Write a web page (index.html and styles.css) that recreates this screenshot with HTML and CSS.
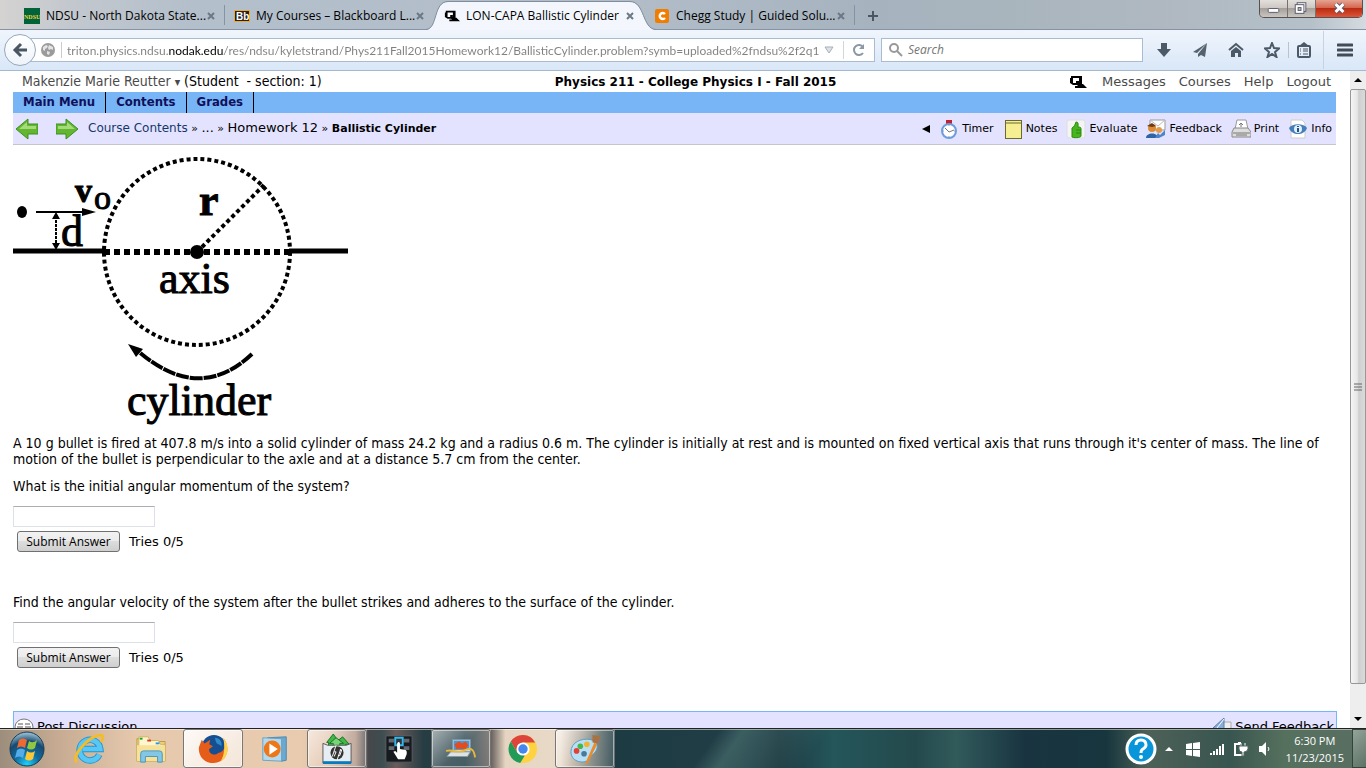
FILE: index.html
```html
<!DOCTYPE html>
<html lang="en">
<head>
  <meta charset="UTF-8">
  <title>LON-CAPA Ballistic Cylinder</title>
  <link rel="stylesheet" href="styles.css">
</head>
<body>
  <!-- shapes used more than once -->
  <svg class="defs" aria-hidden="true">
    <symbol id="lon" viewBox="0 0 18 14">
      <path d="M2 1h11v8h1l4 4H6v-2h3L8 10H4L1 8V3h1z" fill="#000"/>
      <path d="M4 3h6v5H4z" fill="#fff"/>
      <path d="M7 6h3v2H7z" fill="#000"/>
    </symbol>
    <symbol id="close" viewBox="0 0 8 8">
      <path d="M1 1l6 6M7 1L1 7" stroke="#6c7885" stroke-width="2" fill="none"/>
    </symbol>
  </svg>

  <!-- tabs -->
  <header class="tabstrip">
    <div class="tab first">
      <svg class="favicon" viewBox="0 0 16 16"><path d="M0 0h16v16H0z" fill="#00633a"/><text x="0" y="11" class="ndsu">NDSU</text></svg>
      <a href="#" class="tab-title">NDSU - North Dakota State...</a>
      <button class="tab-close" aria-label="Close tab"><svg viewBox="0 0 8 8"><use href="#close"/></svg></button>
    </div>
    <div class="tab second">
      <svg class="favicon" viewBox="0 0 16 16"><rect x="0.5" y="2.5" width="15" height="11" fill="#222" stroke="#f5a623"/><text x="2" y="12" class="bb">Bb</text></svg>
      <a href="#" class="tab-title">My Courses – Blackboard L...</a>
      <button class="tab-close" aria-label="Close tab"><svg viewBox="0 0 8 8"><use href="#close"/></svg></button>
    </div>
    <div class="tab active">
      <svg class="tab-shape" viewBox="0 0 230 30" preserveAspectRatio="none">
        <path d="M0 30C12 29 7 2 22 2H204C219 2 216 29 230 30z" fill="#f3f7fd"/>
        <path d="M0 29.500C12 29 7 1.500 22 1.500H204C219 1.500 216 29 230 29.500" fill="none" stroke="#7f8d9c"/>
      </svg>
      <svg class="favicon" viewBox="0 0 18 14"><use href="#lon"/></svg>
      <a href="#" class="tab-title">LON-CAPA Ballistic Cylinder</a>
      <button class="tab-close" aria-label="Close tab"><svg viewBox="0 0 8 8"><use href="#close"/></svg></button>
    </div>
    <div class="tab fourth">
      <svg class="favicon" viewBox="0 0 16 16"><rect x="1" y="1" width="14" height="14" rx="2" fill="#f07d00"/><path d="M11 6A3 3 0 1 0 11 10" fill="none" stroke="#fff" stroke-width="2.500"/></svg>
      <a href="#" class="tab-title">Chegg Study | Guided Solu...</a>
      <button class="tab-close" aria-label="Close tab"><svg viewBox="0 0 8 8"><use href="#close"/></svg></button>
    </div>
    <button class="new-tab" aria-label="New tab"><svg viewBox="0 0 10 10"><path d="M5 0v10M0 5h10" stroke="#4a5663" stroke-width="2"/></svg></button>
    <div class="window-buttons">
      <button class="win min" aria-label="Minimize"><svg viewBox="0 0 28 18"><rect x="8.500" y="8.500" width="11" height="4" rx="1" fill="#fff" stroke="#59596b"/></svg></button>
      <button class="win max" aria-label="Restore"><svg viewBox="0 0 28 18"><rect x="9.500" y="2.500" width="9" height="9" fill="#fff" stroke="#59596b"/><rect x="7.500" y="4.500" width="9" height="9" fill="#fff" stroke="#59596b"/><rect x="10.500" y="7.500" width="3" height="3" fill="#bbb" stroke="#59596b"/></svg></button>
      <button class="win exit" aria-label="Close"><svg viewBox="0 0 47 18"><path d="M20 4l8 8M28 4l-8 8" stroke="#59596b" stroke-width="5"/><path d="M20 4l8 8M28 4l-8 8" stroke="#fff" stroke-width="3"/></svg></button>
    </div>
  </header>

  <!-- address bar -->
  <nav class="toolbar">
    <button class="back" aria-label="Back"><svg viewBox="0 0 16 16"><path d="M9 2L3 8l6 6M3 8h12" fill="none" stroke="#4a5662" stroke-width="3"/></svg></button>
    <div class="url-box">
      <svg class="globe" viewBox="0 0 14 14"><circle cx="7" cy="7" r="7" fill="#9b9b9b"/><path d="M2 4l3-2 2 1-1 2-2 1v2L2 7zM8 2l4 2v3l-2-1-2 1-1-2zM6 8l3 1-1 3-2-1z" fill="#e4e4e4"/></svg>
      <input class="url" type="text" aria-label="Address" value="triton.physics.ndsu.nodak.edu/res/ndsu/kyletstrand/Phys211Fall2015Homework12/BallisticCylinder.problem?symb=uploaded%2fndsu%2f2q1">
      <button class="plain" aria-label="Show history"><svg class="drop" viewBox="0 0 10 8"><path d="M1 1h8L5 7z" fill="#dfe3e8" stroke="#a5afb9"/></svg></button>
      <button class="plain reload" aria-label="Reload"><svg viewBox="0 0 12 12"><path d="M10 3A5 5 0 1 0 10 9" fill="none" stroke="#8c98a5" stroke-width="2"/><path d="M11 0v5H6z" fill="#8c98a5"/></svg></button>
    </div>
    <div class="search-box">
      <svg viewBox="0 0 14 14"><circle cx="5" cy="5" r="4" fill="none" stroke="#999" stroke-width="2"/><path d="M8 8l5 5" stroke="#999" stroke-width="2"/></svg>
      <input class="search" type="text" placeholder="Search" aria-label="Search">
    </div>
    <div class="tools">
      <button class="plain" aria-label="Downloads"><svg viewBox="0 0 16 16"><path d="M5 1h6v6h4l-7 8-7-8h4z" fill="#4c5966"/></svg></button>
      <button class="plain" aria-label="Send page"><svg viewBox="0 0 16 16"><path d="M15 1L1 10l4 1zM15 1L6 12v3l3-2 4 2z" fill="#55626f"/></svg></button>
      <button class="plain" aria-label="Home"><svg viewBox="0 0 16 16"><path d="M1 8l7-6 7 6" fill="none" stroke="#4c5966" stroke-width="2"/><path d="M3 9l5-4 5 4v6h-3v-4H7v4H3z" fill="#4c5966"/></svg></button>
      <button class="plain" aria-label="Bookmark this page"><svg viewBox="0 0 16 16"><path d="M8 1l2 5 5 .5-4 3.500 1.500 5L8 12l-4.500 3L5 10 1 6.500 6 6z" fill="none" stroke="#4c5966" stroke-width="2"/></svg></button>
      <button class="plain list" aria-label="Bookmarks"><svg viewBox="0 0 16 16"><rect x="2" y="4" width="12" height="11" rx="1" fill="none" stroke="#4c5966" stroke-width="2"/><path d="M3 4l5-4 5 4z" fill="#4c5966"/><path d="M4 7h1M7 7h5M4 9h1M7 9h5M4 12h1M7 12h5" stroke="#4c5966"/></svg></button>
      <button class="plain burger" aria-label="Menu"><svg viewBox="0 0 16 16"><path d="M1 3h14M1 8h14M1 13h14" stroke="#414c58" stroke-width="3" stroke-linecap="round"/></svg></button>
    </div>
  </nav>

  <div class="viewport">
    <main class="page">
      <div class="user-row">
        <div class="user"><a href="#">Makenzie Marie Reutter <span class="caret">▾</span></a> (Student &nbsp;- section: 1)</div>
        <strong class="course">Physics 211 - College Physics I - Fall 2015</strong>
        <div class="user-links">
          <svg class="lon" viewBox="0 0 18 14"><use href="#lon"/></svg>
          <a href="#">Messages</a>
          <a href="#">Courses</a>
          <a href="#">Help</a>
          <a href="#">Logout</a>
        </div>
      </div>
      <nav class="menu">
        <a href="#">Main Menu</a>
        <a href="#">Contents</a>
        <a href="#">Grades</a>
      </nav>
      <div class="crumb-row">
        <a href="#" class="arrow" aria-label="Previous"><svg viewBox="0 0 22 22"><path d="M0 11L12 1v5h10v10H12v5z" fill="#62b630" stroke="#3f8f22"/><path d="M3 11l8-7v4h9v3z" fill="#a5dc79"/></svg></a>
        <a href="#" class="arrow" aria-label="Next"><svg viewBox="0 0 22 22"><path d="M22 11L10 1v5H0v10h10v5z" fill="#62b630" stroke="#3f8f22"/><path d="M19 11l-8-7v4H2v3z" fill="#a5dc79"/></svg></a>
        <div class="crumbs"><a href="#">Course Contents</a> » <span class="big">...</span> » <span class="big">Homework 12</span> » <b>Ballistic Cylinder</b></div>
        <div class="functions">
          <svg class="fold" viewBox="0 0 8 8"><path d="M8 0v8L0 4z"/></svg>
          <a href="#"><svg viewBox="0 0 20 20"><path d="M7 1h6v4H7z" fill="#c5202c"/><circle cx="10" cy="12" r="7" fill="#fff" stroke="#6e9ddd" stroke-width="2"/><path d="M6 9l4 4 5-2" fill="none" stroke="#777"/><path d="M10 6v1M10 17v1M4 12h1M15 12h1" stroke="#999"/></svg>Timer</a>
          <a href="#"><svg viewBox="0 0 20 20"><rect x="2.500" y="1.500" width="16" height="18" fill="#f5ef92" stroke="#6b6830"/><path d="M3 4h15" stroke="#6b6830"/></svg>Notes</a>
          <a href="#"><svg viewBox="0 0 20 20"><rect x="1" y="1" width="18" height="18" rx="2" fill="#f4f4f4" stroke="#ddd"/><path d="M10 3c3 0 2 3 2 5 3 0 3 1 3 2v7c0 2-8 2-9 1V9c2-1 3-3 4-6z" fill="#47b51d" stroke="#278a10"/><path d="M10 11h5M10 14h5" stroke="#278a10"/></svg>Evaluate</a>
          <a href="#"><svg viewBox="0 0 20 20"><path d="M4 1h15v10H4z" fill="#fff" stroke="#999"/><path d="M4 1l8 6 7-6" fill="none" stroke="#bbb"/><path d="M0 19c0-6 12-6 12 0z" fill="#2f63a3"/><circle cx="6" cy="9" r="4" fill="#dd8a35"/><path d="M1 7l5-3 4 3-4 1z" fill="#6b3b1b"/><circle cx="13" cy="11" r="3" fill="#e29a49"/><path d="M9 19l3-5 2 2 5-5v5l-6 3z" fill="#4d84c8"/></svg>Feedback</a>
          <a href="#"><svg viewBox="0 0 20 20"><path d="M6 1h9l2 9H4z" fill="#fff" stroke="#999"/><path d="M10 8V4M8 6l2-2 2 2" fill="none" stroke="#777"/><path d="M3 9h14l3 4v5H1v-5z" fill="#ddd" stroke="#888"/><path d="M2 14h17M5 16h11" stroke="#777"/></svg>Print</a>
          <a href="#"><svg viewBox="0 0 20 20"><path d="M3 1h11l3 3v15H3z" fill="#fff" stroke="#ccc"/><path d="M1 9c3-5 15-5 18 0-3 8-15 8-18 0z" fill="#467fb8"/><circle cx="10" cy="10" r="4" fill="#e1efff"/><path d="M10 7v1M10 9v4" stroke="#24527e" stroke-width="2"/></svg>Info</a>
        </div>
      </div>

      <svg class="diagram" viewBox="13 149 336 276" role="img" aria-label="Bullet moving toward a cylinder at distance d from its axis">
        <path d="M13 251H104M289 251H348" stroke="#000" stroke-width="5"/>
        <path d="M104 252H289" stroke="#000" stroke-width="6" stroke-dasharray="6 4"/>
        <circle cx="197" cy="252" r="93" fill="none" stroke="#000" stroke-width="4" stroke-dasharray="4 3"/>
        <path d="M197 252L264 185" stroke="#000" stroke-width="4" stroke-dasharray="4 3"/>
        <circle cx="197" cy="252" r="7"/>
        <ellipse cx="22" cy="212" rx="5" ry="6"/>
        <path d="M36 212H86" stroke="#000" stroke-width="2"/>
        <path d="M96 212l-14-4v8z"/>
        <path d="M56 216V247" stroke="#000" stroke-width="2" stroke-dasharray="3 1"/>
        <path d="M56 212l-4 7h8zM56 250l-4-7h8z"/>
        <path d="M252 354Q199 404 138 351" fill="none" stroke="#000" stroke-width="4" stroke-dasharray="13 1"/>
        <path d="M128 344l15 5-7 8z"/>
        <text x="75" y="202" class="label sub bold">v</text>
        <text x="94" y="209" class="label sub">o</text>
        <text x="61" y="246" class="label">d</text>
        <text x="199" y="215" class="label bold">r</text>
        <text x="159" y="293" class="label">axis</text>
        <text x="127" y="415" class="label">cylinder</text>
      </svg>

      <p class="problem">A 10 g bullet is fired at 407.8 m/s into a solid cylinder of mass 24.2 kg and a radius 0.6 m. The cylinder is initially at rest and is mounted on fixed vertical axis that runs through it's center of mass. The line of motion of the bullet is perpendicular to the axle and at a distance 5.7 cm from the center.</p>

      <form class="part">
        <label for="answer1">What is the initial angular momentum of the system?</label>
        <input type="text" id="answer1">
        <div class="submit-row"><button type="button">Submit Answer</button> Tries 0/5</div>
      </form>
      <form class="part">
        <label for="answer2">Find the angular velocity of the system after the bullet strikes and adheres to the surface of the cylinder.</label>
        <input type="text" id="answer2">
        <div class="submit-row"><button type="button">Submit Answer</button> Tries 0/5</div>
      </form>

      <footer class="discussion">
        <a href="#"><svg viewBox="0 0 20 20"><ellipse cx="10" cy="10" rx="9" ry="8" fill="#fff" stroke="#777"/><path d="M4 7h5M11 7h5M3 10h6M11 10h6M5 13h10" stroke="#555"/></svg>Post Discussion</a>
        <a href="#"><svg viewBox="0 0 20 20"><path d="M8 5h11v12H8z" fill="#eee" stroke="#aaa"/><path d="M1 11L12 1v13z" fill="#86addb" stroke="#587fac"/><path d="M5 11l7-9" stroke="#fff"/></svg>Send Feedback</a>
      </footer>
    </main>

    <div class="scrollbar">
      <button aria-label="Scroll up"><svg viewBox="0 0 8 4"><path d="M0 4l4-4 4 4z"/></svg></button>
      <div class="thumb"><svg viewBox="0 0 8 8"><path d="M0 1h8M0 4h8M0 7h8" stroke="#666"/></svg></div>
      <button class="down" aria-label="Scroll down"><svg viewBox="0 0 8 4"><path d="M0 0h8L4 4z"/></svg></button>
    </div>
  </div>

  <!-- taskbar -->
  <footer class="taskbar">
    <button class="start" aria-label="Start">
      <svg viewBox="0 0 36 36">
        <defs><radialGradient id="orb" cx="50%" cy="95%" r="90%"><stop offset="0" stop-color="#1ed3ff"/><stop offset=".4" stop-color="#116c9f"/><stop offset=".75" stop-color="#174a70"/><stop offset="1" stop-color="#8eb5c9"/></radialGradient></defs>
        <circle cx="18" cy="18" r="17" fill="url(#orb)" stroke="#173c56"/>
        <path d="M10 9q4-3 8 0l-2 8q-4-3-8 0z" fill="#ef6a30"/><path d="M20 10q4 3 8-1l-2 8q-4 3-8 0z" fill="#91c83e"/><path d="M8 19q4-3 8 0l-2 8q-4-3-8 0z" fill="#55acea"/><path d="M18 20q4 3 8 0l-2 8q-4 3-8 0z" fill="#fcc934"/>
      </svg>
    </button>
    <button class="task" aria-label="Internet Explorer"><svg viewBox="0 0 32 32"><path d="M27 22A11 11 0 1 1 28 16H9" fill="none" stroke="#2794d0" stroke-width="7"/><path d="M27 22A11 11 0 1 1 28 16H9" fill="none" stroke="#58c7f3" stroke-width="5"/><path d="M3 30C-4 24 15 3 28 1c4 0 3 4 1 8" fill="none" stroke="#f4bd28" stroke-width="3"/></svg></button>
    <button class="task" aria-label="Explorer"><svg viewBox="0 0 32 32"><path d="M1 5h9v3h21v21H1z" fill="#eed177" stroke="#bc9b43"/><path d="M3 3h10l2 4h9l2 4h4v4H3z" fill="#fff6ce" stroke="#cbb15e"/><path d="M4 4h3v2H4z" fill="#19a52d"/><path d="M12 6h4v2h-4z" fill="#dc3427"/><path d="M21 9h4v2h-4z" fill="#2996e8"/><path d="M1 12h30v17H1z" fill="#f6e198"/><path d="M5 30V21q0-3 3-3h17q3 0 3 3v9h-5v-6H10v6z" fill="#83c7e6" stroke="#4a93bb"/></svg></button>
    <button class="task open bright" aria-label="Firefox"><svg viewBox="0 0 32 32"><circle cx="17" cy="14" r="13" fill="#164f91"/><path d="M18 4c5 0 8 4 7 9-2-2-5-2-6-5z" fill="#2e8ac9"/><path d="M27 4c8 10 5 26-10 27C7 31 0 24 1 14L4 6l3 4 6-4-1 5 4 2-4 3c-1 5 6 8 10 4 7-1 8-10 5-16z" fill="#e55d19"/><path d="M27 4c8 10 5 21-3 25 4-6 5-14 3-25z" fill="#ffd34b"/></svg></button>
    <button class="task" aria-label="Media Player"><svg viewBox="0 0 32 32"><path d="M8 4l20-1v25l-5 1z" fill="#6ba9d0" stroke="#4c88af"/><path d="M3 4l20 1v24L3 28z" fill="#b2d9ef" stroke="#67a2c4"/><circle cx="13" cy="16" r="9" fill="#ef7617"/><path d="M10 10l9 6-9 6z" fill="#fff"/></svg></button>
    <button class="task open" aria-label="HP Download Store"><svg viewBox="0 0 32 32"><path d="M5 9l7-9 5 7 5-4 7 8h-4v2H7V9z" fill="#41b849" stroke="#176f25"/><path d="M8 10l7-6 8 6h-4v4h-7v-4z" fill="#77d576" stroke="#176f25"/><path d="M1 10l5 2h20l5-2v21H1z" fill="#e7eef3" stroke="#555"/><path d="M1 29h30v3H1z" fill="#087bbf"/><circle cx="16" cy="20" r="7" fill="#333"/><path d="M15 12l-4 12M13 19h2l-2 5M20 16l-4 12M19 17h2l-2 6h-2" fill="none" stroke="#fff"/></svg></button>
    <button class="task" aria-label="Touch keyboard"><svg viewBox="0 0 32 32"><rect x="2" y="2" width="28" height="28" rx="1" fill="#171b20" stroke="#5a5f64"/><path d="M5 5h6v4H5zM21 5h6v4h-6zM5 13h6v4H5zM21 13h6v4h-6z" fill="#626970"/><path d="M12 4h8v8h-8z" fill="#273641" stroke="#36b7e9" stroke-width="2"/><path d="M14 10q2-3 3 0v6l6 1q2 1 1 5l-2 5h-7l-5-8 2-1 2 2z" fill="#fff"/></svg></button>
    <button class="task open" aria-label="Display settings"><svg viewBox="0 0 32 32"><path d="M7 6h19v13H7z" fill="#c8e8f5" stroke="#7894a2"/><path d="M8 7h17v10H8z" fill="#5394ce"/><path d="M9 11l5-3 3 2 4-2 3 4-3 4H11z" fill="#e24c1f"/><path d="M5 19h21l-3 5H1z" fill="#dce2e6" stroke="#8b969d"/><path d="M0 18c10-2 12 4 21-1 7-3 9 1 10 8" fill="none" stroke="#e7b93b" stroke-width="2"/></svg></button>
    <button class="task" aria-label="Chrome"><svg viewBox="0 0 32 32"><circle cx="16" cy="16" r="15" fill="#ffd340"/><path d="M3 8A15 15 0 0 1 29 9H16L10 20z" fill="#dd443b"/><path d="M3 8l7 12 8 3-5 8A15 15 0 0 1 3 8z" fill="#219b58"/><circle cx="16" cy="16" r="7" fill="#fff"/><circle cx="16" cy="16" r="5" fill="#4687ef"/></svg></button>
    <button class="task open" aria-label="Paint"><svg viewBox="0 0 32 32"><path d="M1 19C1 9 12 4 22 6c7 2 9 7 5 13-3 4-5 3-7 8-3 5-19 4-19-8z" fill="#b8dff3" stroke="#579cc5"/><circle cx="7" cy="18" r="3" fill="#e14235"/><circle cx="11" cy="13" r="3" fill="#49b747"/><circle cx="18" cy="11" r="3" fill="#f0b42d"/><circle cx="15" cy="21" r="3" fill="#46799a"/><path d="M26 9L16 32l3-1L29 11z" fill="#eb8b2a"/><path d="M24 1l8 1-2 8-6-1z" fill="#a97242"/></svg></button>

    <div class="tray">
      <button class="help" aria-label="Help"><svg viewBox="0 0 32 32"><circle cx="16" cy="16" r="14" fill="#0895d9" stroke="#fff" stroke-width="3"/><path d="M11 12q0-5 5-5t5 5q0 2-3 4-2 1-2 4" fill="none" stroke="#fff" stroke-width="3"/><circle cx="16" cy="24" r="2" fill="#fff"/></svg></button>
      <button class="up" aria-label="Show hidden icons"><svg viewBox="0 0 8 4"><path d="M0 4l4-4 4 4z" fill="#fff"/></svg></button>
      <button aria-label="Windows"><svg viewBox="0 0 16 16"><path d="M1 3l6-1v6H1zM8 2l7-1v7H8zM1 9h6v6l-6-1zM8 9h7v7l-7-1z" fill="#fff"/></svg></button>
      <button aria-label="Network"><svg viewBox="0 0 16 16"><path d="M2 14v-2M5 14v-4M8 14V8M11 14V5M14 14V3" stroke="#fff" stroke-width="2"/></svg></button>
      <button aria-label="Power"><svg viewBox="0 0 16 16"><path d="M7 3H2v11h8v-2" fill="none" stroke="#fff" stroke-width="2"/><path d="M5 1h3v2H5z" fill="#fff"/><path d="M8 5V2M12 5V2" stroke="#fff"/><path d="M6 5h9v3q-1 3-4 3v4H9v-4q-3 0-3-3z" fill="#fff" stroke="#566"/></svg></button>
      <button aria-label="Volume"><svg viewBox="0 0 16 16"><path d="M2 5h3l4-4v14l-4-4H2z" fill="#fff"/><path d="M11 6q2 2 0 4" fill="none" stroke="#fff"/></svg></button>
      <div class="clock">6:30 PM<br>11/23/2015</div>
      <button class="show-desktop" aria-label="Show desktop"></button>
    </div>
  </footer>
</body>
</html>
```

FILE: styles.css
```css
* {
  box-sizing: border-box;
}

body {
  display: flex;
  flex-direction: column;
  height: 100vh;
  margin: 0;
  overflow: hidden;
  font-family: "DejaVu Sans", Verdana, sans-serif;
  font-size: 13px;
  line-height: 16px;
  color: #000;
  background-color: #fff;
}

a {
  color: inherit;
  text-decoration: none;
}

button {
  margin: 0;
  padding: 0;
  border: none;
  background: none;
}

svg {
  display: block;
  flex: none;
}

.defs {
  position: absolute;
  width: 0;
  height: 0;
}

/* tabs */
.tabstrip {
  display: flex;
  flex: none;
  height: 30px;
  border-bottom: 1px solid #8494a4;
  background: linear-gradient(90deg, #d5d3d2 0, #c3c8ce 5%, #b3bfcb 14%, #b2bdc8 45%, #a6b3bf 64%, #a9b5bd 74%, #afb8c1 85%, #b5c0c9 96%, #d5dbe0 100%);
  font-family: "Open Sans", "Segoe UI", sans-serif;
  font-size: 12px;
}

.tab {
  position: relative;
  display: flex;
  align-items: center;
  height: 30px;
  padding-top: 2px;
}

.tab.first {
  width: 225px;
  padding-left: 24px;
  background: linear-gradient(#8494a4, #8494a4) right 5px / 1px 20px no-repeat;
}

.tab.second {
  width: 209px;
  padding-left: 9px;
}

.tab.active {
  width: 214px;
  padding-left: 10px;
}

.tab.fourth {
  width: 207px;
  padding-left: 6px;
  background: linear-gradient(#8494a4, #8494a4) right 5px / 1px 20px no-repeat;
}

.tab-shape {
  position: absolute;
  left: -8px;
  top: 0;
  width: 230px;
  height: 30px;
}

.favicon {
  position: relative;
  width: 16px;
  height: 16px;
  margin-right: 6px;
}

.ndsu {
  font: bold 6px "Liberation Serif", serif;
  fill: #f5d33c;
}

.bb {
  font: bold 10px "Liberation Sans", sans-serif;
  fill: #fff;
}

.tab-title {
  position: relative;
  flex: 1;
  white-space: nowrap;
}

.tab-close {
  position: relative;
  margin-right: 10px;
}

.tab.active .tab-close {
  margin-right: 14px;
}

.tab-close svg {
  width: 8px;
  height: 8px;
}

.new-tab {
  padding: 2px 13px 0;
}

.new-tab svg {
  width: 10px;
  height: 10px;
}

.window-buttons {
  display: flex;
  height: 18px;
  margin-left: auto;
  margin-right: 3px;
  border: 1px solid #59514f;
  border-top: none;
  border-radius: 0 0 5px 5px;
  overflow: hidden;
}

.win {
  border-right: 1px solid #77716d;
  background: linear-gradient(#e3dfdb, #cdc8c3 45%, #a6a09b 50%, #c9c5c0);
}

.win svg {
  width: 27px;
  height: 18px;
}

.win.exit {
  border-right: none;
  background: linear-gradient(#e6a393, #d5674f 45%, #b92c11 50%, #df5539);
}

.win.exit svg {
  width: 46px;
}

/* address bar */
.toolbar {
  display: flex;
  flex: none;
  align-items: center;
  height: 41px;
  padding-left: 4px;
  border-bottom: 1px solid #a3b9cf;
  background: linear-gradient(#f0f5fc, #d9e7f8);
  font-family: "Open Sans", "Segoe UI", sans-serif;
  font-size: 12px;
}

.back {
  display: flex;
  flex: none;
  align-items: center;
  justify-content: center;
  z-index: 1;
  width: 32px;
  height: 32px;
  border: 1px solid #97a8ba;
  border-radius: 50%;
  background: linear-gradient(#fff, #eef4fb);
}

.back svg {
  width: 16px;
  height: 16px;
}

.url-box {
  display: flex;
  flex: 1;
  align-items: center;
  height: 24px;
  margin-left: -6px;
  padding-left: 10px;
  border: 1px solid #a9bcd0;
  background-color: #fff;
}

.globe {
  width: 14px;
  height: 14px;
  margin-right: 6px;
}

.url {
  flex: 1;
  min-width: 0;
  height: 16px;
  padding: 0 0 0 5px;
  border: none;
  border-left: 1px solid #ccc;
  outline: none;
  font-family: Lato, "Segoe UI", sans-serif;
  font-size: 12px;
  color: #808080;
  /* darkens the domain part of the address */
  background: linear-gradient(90deg, #808080 107px, #000 107px, #000 162px, #808080 162px);
  -webkit-background-clip: text;
  background-clip: text;
  -webkit-text-fill-color: transparent;
}

.plain svg {
  width: 16px;
  height: 16px;
}

.plain .drop {
  width: 10px;
  height: 8px;
  margin: 0 9px 0 2px;
}

.reload {
  height: 18px;
  padding: 0 9px;
  border-left: 1px solid #d0d6dc;
}

.reload svg {
  width: 12px;
  height: 12px;
}

.search-box {
  display: flex;
  flex: none;
  align-items: center;
  width: 262px;
  height: 24px;
  margin-left: 6px;
  padding-left: 7px;
  border: 1px solid #a9bcd0;
  background-color: #fff;
}

.search-box svg {
  width: 14px;
  height: 14px;
}

.search {
  flex: 1;
  min-width: 0;
  padding: 0 5px;
  border: none;
  outline: none;
  font: inherit;
  background: none;
}

.search::placeholder {
  font-style: italic;
  color: #757575;
}

.tools {
  display: flex;
  flex: none;
  align-items: center;
  gap: 20px;
  padding-left: 13px;
}

.list {
  margin-left: -12px;
  padding-left: 7px;
  border-left: 1px solid #b5c4d4;
}

.burger {
  height: 38px;
  padding: 0 13px;
  margin-left: -9px;
  border-left: 1px solid #c5d3e2;
}

/* page */
.viewport {
  display: flex;
  flex: 1;
  min-height: 0;
}

.page {
  flex: 1;
  min-width: 0;
  padding: 0 14px 0 13px;
  overflow: hidden;
}

.user-row {
  display: grid;
  grid-template-columns: 14fr auto 13fr;
  align-items: center;
  height: 21px;
  padding: 0 5px 0 9px;
}

.user,
.problem,
.part label {
  font-family: "DejaVu Sans Condensed", Verdana, sans-serif;
  font-size: 14px;
}

.user a,
.user-links a {
  color: #4a4a4a;
}

.caret {
  font-size: 12px;
}

.course {
  font-size: 12px;
}

.user-links {
  display: flex;
  align-items: center;
  justify-content: flex-end;
  gap: 13px;
}

.lon {
  width: 18px;
  height: 14px;
  margin-right: 2px;
}

.menu {
  display: flex;
  height: 21px;
  background-color: #77b5f7;
}

.menu a {
  padding: 2px 10px;
  border-right: 1px solid #000;
  font-family: "DejaVu Sans Condensed", Verdana, sans-serif;
  font-weight: bold;
  color: #10105a;
}

.crumb-row {
  display: flex;
  align-items: center;
  height: 32px;
  padding: 0 4px 0 3px;
  border-bottom: 1px solid #c6c6c6;
  background-color: #e4e3ff;
}

.arrow {
  margin-right: 18px;
}

.arrow + .arrow {
  margin-right: 10px;
}

.arrow svg {
  width: 22px;
  height: 22px;
}

.crumbs {
  flex: 1;
  font-size: 11px;
}

.crumbs a {
  font-size: 12px;
  color: #14386b;
}

.crumbs .big {
  font-size: 13px;
}

.functions {
  display: flex;
  align-items: center;
  gap: 9px;
  font-size: 11px;
}

.functions a,
.discussion a {
  display: flex;
  align-items: center;
  gap: 3px;
}

.functions a svg {
  width: 20px;
  height: 20px;
}

.fold {
  width: 8px;
  height: 8px;
}

.diagram {
  width: 336px;
  height: 276px;
  margin-top: 4px;
}

.label {
  font: 44px "Liberation Serif", "Times New Roman", serif;
  stroke: #000;
  stroke-width: 1px;
}

.label.sub {
  font-size: 34px;
}

.label.bold {
  font-weight: bold;
}

.problem {
  margin: 10px 0 11px;
}

.part {
  height: 116px;
}

.part label {
  display: block;
}

.part input {
  display: block;
  width: 142px;
  height: 21px;
  margin: 12px 0 4px;
  border: 1px solid #dde1ea;
  border-top-color: #abadb3;
}

.submit-row {
  display: flex;
  align-items: center;
  gap: 9px;
  padding-left: 4px;
}

.submit-row button {
  width: 103px;
  height: 21px;
  border: 1px solid #707070;
  border-radius: 3px;
  background: linear-gradient(#f2f2f2, #ebebeb 50%, #dddddd 50%, #cfcfcf);
  font-family: "Open Sans", "Segoe UI", sans-serif;
  font-size: 12px;
}

.discussion {
  display: flex;
  align-items: center;
  justify-content: space-between;
  height: 32px;
  margin: 1px -1px 0 0;
  padding-right: 2px;
  border: 1px solid #77b5f7;
  background-color: #e4e3ff;
}

.discussion svg {
  width: 20px;
  height: 20px;
}

/* scrollbar */
.scrollbar {
  display: flex;
  flex: none;
  flex-direction: column;
  width: 16px;
  background-color: #eee;
}

.scrollbar button {
  flex: none;
  height: 18px;
  padding: 0 4px;
}

.scrollbar button svg {
  width: 8px;
  height: 4px;
}

.thumb {
  display: flex;
  flex: 1;
  align-items: center;
  justify-content: center;
  margin-bottom: 26px;
  border: 1px solid #979797;
  border-radius: 2px;
  background: linear-gradient(90deg, #f5f5f5, #e6e6e6 45%, #cfcfcf 55%, #dadada);
}

.thumb svg {
  width: 8px;
  height: 8px;
}

/* taskbar */
.taskbar {
  display: flex;
  flex: none;
  align-items: center;
  height: 40px;
  border-top: 1px solid #222;
  background:
    linear-gradient(rgba(255, 255, 255, 0.5) 1px, transparent 1px),
    linear-gradient(125deg, transparent 590px, rgba(120, 170, 160, 0.3) 610px, transparent 680px),
    linear-gradient(90deg, #9c8d7c 0, #c5aa91 4%, #e6c9ad 10%, #e9cbb0 22%, #dfc0a8 24%, #b59a8b 26%, #46474b 27%, #3d4d50 28%, #6c5c5b 29%, #263d43 31%, #1d3a42 34%, #6f6763 36%, #e5d4c1 37%, #e9dac8 41%, #b9ab9b 42%, #1d3b43 45%, #213e46 54%, #1c3840 57%, #24565a 61%, #24494c 67%, #315a5b 70%, #193440 75%, #17363e 81%, #4d6158 84%, #38554f 90%, #56705e 94%, #586e61 100%);
}

.start {
  margin: 0 13px 0 9px;
}

.start svg {
  width: 36px;
  height: 36px;
}

.task {
  display: flex;
  flex: none;
  align-items: center;
  justify-content: center;
  width: 60px;
  height: 39px;
  margin: 0 1px;
  border: 1px solid transparent;
}

.task svg {
  width: 30px;
  height: 30px;
}

.task.open {
  border-color: rgba(240, 240, 240, 0.8);
  border-radius: 3px;
  outline: 1px solid rgba(0, 0, 0, 0.5);
  outline-offset: -1px;
  box-shadow: inset 0 0 0 1px rgba(255, 255, 255, 0.5);
  background: linear-gradient(135deg, rgba(255, 255, 255, 0.6), rgba(255, 255, 255, 0.2) 50%, rgba(255, 255, 255, 0.15));
}

.task.bright {
  background: linear-gradient(135deg, rgba(255, 255, 255, 0.9), rgba(255, 255, 255, 0.5));
}

.tray {
  display: flex;
  align-items: center;
  gap: 8px;
  height: 100%;
  margin-left: auto;
  color: #fff;
  font-family: "Open Sans", "Segoe UI", sans-serif;
  font-size: 11px;
}

.tray svg {
  width: 16px;
  height: 16px;
}

.tray .help svg {
  width: 32px;
  height: 32px;
}

.tray .up svg {
  width: 8px;
  height: 4px;
  margin-right: 4px;
}

.clock {
  margin: 0 0 0 5px;
  line-height: 17px;
  text-align: center;
}

.show-desktop {
  width: 14px;
  height: 100%;
  border: 1px solid #33443d;
  border-right: none;
  background: linear-gradient(135deg, #93a398, #5d7266);
}
```
